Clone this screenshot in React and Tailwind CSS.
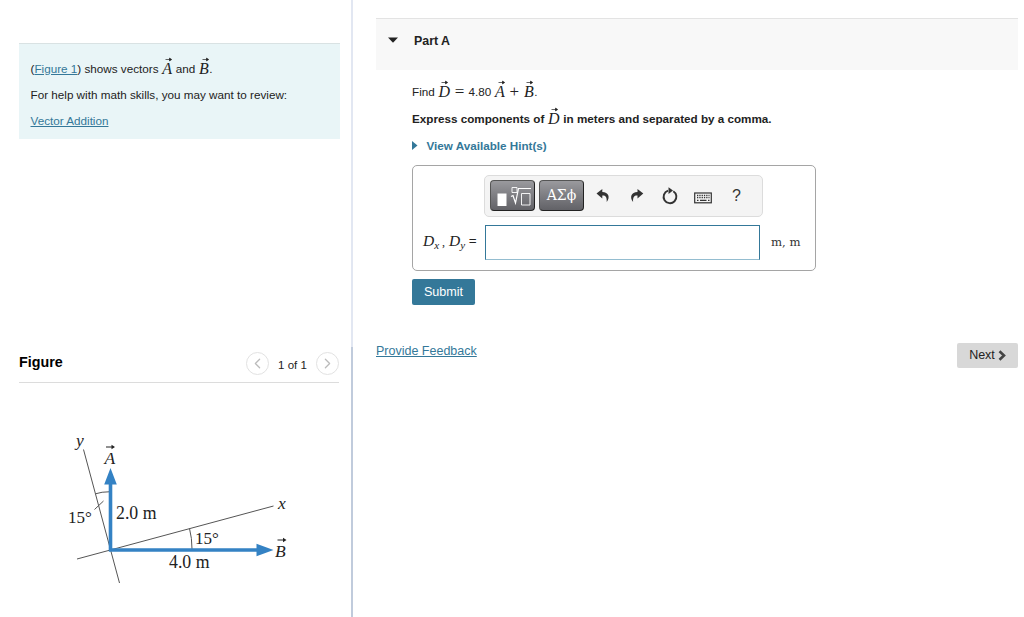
import { ChevronLeft, ChevronRight } from 'lucide-react';

function Vec({ name }) {
  return (
    <span className="relative inline-block px-[0.5px] font-['Liberation_Serif',serif] text-[16px] font-normal italic leading-none">
      {name}
      <svg className="absolute -top-[4px] left-[3px]" width="8" height="5" viewBox="0 0 8 5">
        <path d="M0.500 2.500H6M4.500 1.100L6.700 2.500L4.500 3.900Z" fill="#222" stroke="#222" strokeWidth="0.700" />
      </svg>
    </span>
  );
}

function Link({ children }) {
  return <a href="#" className="text-[#347899] underline underline-offset-[1px]">{children}</a>;
}

function IntroCard() {
  return (
    <section className="mt-[43px] ml-[19px] h-[96px] w-[321px] border-t border-[#d9e2e3] bg-[#e9f5f7] pt-[12px] pl-[11.5px] text-[11.7px] text-[#222]">
      <p className="flex h-[26px] items-center pb-[1px] whitespace-pre">
        <span>(<Link>Figure 1</Link>) shows vectors </span>
        <Vec name="A" />
        <span> and </span>
        <Vec name="B" />
        <span>.</span>
      </p>
      <p className="flex h-[26px] items-center whitespace-pre">For help with math skills, you may want to review:</p>
      <p className="flex h-[26px] items-center"><Link>Vector Addition</Link></p>
    </section>
  );
}

function VectorFigure() {
  return (
    <svg className="mt-[37px] ml-[50px]" width="260" height="180" viewBox="50 420 260 180" fontFamily="'Liberation Serif', serif" fill="#222">
      <g fill="none" stroke="#555" strokeWidth="1">
        <path d="M83.500 449.500L119.500 583" />
        <path d="M77 559L273.500 506" />
        <path d="M95.500 493.800Q102 491.700 109 491.800" />
        <path d="M189.500 528.500Q192 538 192 549" />
        <path d="M94.500 509.500L103.500 501" />
      </g>
      <path d="M110.500 551.500V482M109 550H258" fill="none" stroke="#3482c4" strokeWidth="3.600" />
      <path d="M110.500 468L116.800 484.500H104.200ZM273.500 550L256.500 543.700V556.300Z" fill="#3482c4" />
      <text x="76" y="446" fontSize="17.5" fontStyle="italic">y</text>
      <text x="278" y="509" fontSize="17.5" fontStyle="italic">x</text>
      <text x="104.500" y="464" fontSize="17.5" fontStyle="italic">A</text>
      <text x="275" y="557" fontSize="17.5" fontStyle="italic">B</text>
      <path d="M106 447H113M277.500 540H284.500" fill="none" stroke="#222" strokeWidth="1" />
      <path d="M111.500 444.800L115 447L111.500 449.200ZM283 537.800L286.500 540L283 542.200Z" />
      <text x="68" y="523" fontSize="17">15°</text>
      <text x="116" y="519" fontSize="17.8">2.0 m</text>
      <text x="195" y="544" fontSize="17">15°</text>
      <text x="169" y="568" fontSize="17.8">4.0 m</text>
    </svg>
  );
}

function FigurePanel() {
  return (
    <section>
      <header className="mt-[208px] ml-[19px] flex h-[36px] w-[320px] border-b border-[#dcdcdc] text-[#222]">
        <h2 className="flex-1 pt-[5px] text-[14.3px] leading-[20px] font-bold text-black">Figure</h2>
        <div className="flex h-[35px] items-start pt-[5px]">
          <button className="flex size-[23px] items-center justify-center rounded-full border border-[#e2e2e2] text-[#bbb]">
            <ChevronLeft size={17} strokeWidth={1.8} />
          </button>
          <span className="w-[47px] pt-[2px] text-center text-[11.5px] leading-[23px]">1 of 1</span>
          <button className="flex size-[23px] items-center justify-center rounded-full border border-[#e2e2e2] text-[#bbb]">
            <ChevronRight size={17} strokeWidth={1.8} />
          </button>
        </div>
      </header>
      <VectorFigure />
    </section>
  );
}

function Toolbar() {
  const key = 'flex h-[31px] w-[45px] items-center justify-center rounded-[4px] border border-[#555] border-r-[#222] border-b-[#222] bg-linear-to-b from-[#9a9a9e] to-[#626267] text-white';
  return (
    <div className="ml-[71px] flex h-[42px] w-[279px] items-center rounded-[5px] border border-[#dcdcdc] bg-[#f4f4f4] pb-[1px] pl-[5px] text-[#333]">
      <button className={key}>
        <svg width="36" height="22" viewBox="0 0 36 22" fill="none" stroke="#fff">
          <path d="M2.500 8.500h9v12.500h-9z" fill="#fff" stroke="none" />
          <path d="M17 2.500h5v5h-5zM26.500 8.500h8.500v11.500h-8.500z" strokeWidth="0.900" />
          <path d="M16 11.500L18 10.500L20.500 18L23.500 3.500H36" strokeWidth="1.200" />
        </svg>
      </button>
      <button className={`${key} ml-[4px] font-['DejaVu_Serif',serif] text-[14px]`}>ΑΣϕ</button>
      <svg className="ml-[12px]" width="15" height="15" viewBox="0 0 15 15">
        <path d="M6.300 1L0.500 5.500L6.300 10.400V7.600C9.500 7.400 11 9 10.700 14C14.500 9 12.600 4 6.300 3.900Z" fill="#333" />
      </svg>
      <svg className="ml-[18px]" width="15" height="15" viewBox="0 0 15 15">
        <path d="M8.500 1L14.300 5.500L8.500 10.400V7.600C5.300 7.400 3.800 9 4.100 14C0.300 9 2.200 4 8.500 3.900Z" fill="#333" />
      </svg>
      <svg className="ml-[17px]" width="18" height="18" viewBox="0 0 18 18">
        <path d="M12.300 4.300A6.400 6.400 0 1 1 7 3.700" fill="none" stroke="#333" strokeWidth="1.900" />
        <path d="M7.500 0.300L12 3.600L7.500 7Z" fill="#333" />
      </svg>
      <svg className="mt-[4px] ml-[15px]" width="18" height="12" viewBox="0 0 18 12">
        <rect x="0.700" y="1" width="16.600" height="9.800" fill="none" stroke="#333" strokeWidth="1.200" />
        <path d="M3 3.500H15.500M3 5.700H15.500" stroke="#333" strokeWidth="1.300" strokeDasharray="1.300 1" />
        <path d="M3 8.300H4.500M6 8.300H12.500M14 8.300H15.500" stroke="#333" strokeWidth="1.300" />
      </svg>
      <span className="ml-[20px] text-[16px] leading-none">?</span>
    </div>
  );
}

function AnswerBox() {
  return (
    <div className="mt-[5px] h-[106px] w-[404px] rounded-[5px] border border-[#a5a5a5] pt-[9px]">
      <Toolbar />
      <div className="mt-[8px] flex h-[35px] items-center">
        <label className="w-[72px] pb-[3px] pl-[10px] font-['Liberation_Serif',serif] text-[15.500px] whitespace-pre">
          <i>D</i><sub className="-bottom-[3px] text-[11px] italic">x</sub><span className="text-[12px]"> , </span><i className="ml-[1px]">D</i><sub className="-bottom-[3px] text-[11px] italic">y</sub>
          <span className="text-[14px] font-bold"> =</span>
        </label>
        <input className="h-[35px] w-[275px] border border-[#347899] border-b-[#94bdd0] bg-white px-2 outline-none" />
        <span className="ml-[11px] pt-[1px] font-['DejaVu_Serif',serif] text-[11.700px] text-[#333]">m, m</span>
      </div>
    </div>
  );
}

function PartA() {
  return (
    <main className="w-[642px] pt-[18px] text-[11.68px] text-[#222]">
      <header className="flex h-[52px] border-t border-[#e3e3e3] bg-[#f8f8f8] pt-[12px] pl-[12px]">
        <svg className="mt-[6px]" width="10" height="6" viewBox="0 0 10 6"><path d="M0 0.500H10L5 5.700Z" fill="#222" /></svg>
        <h1 className="ml-[16px] text-[12.4px] leading-[20px] font-bold">Part A</h1>
      </header>
      <div className="pt-[8px] pl-[36px]">
        <p className="flex h-[27px] items-center whitespace-pre">
          <span>Find </span><Vec name="D" />
          <span className="font-['Liberation_Serif',serif] text-[17px]"> = </span><span>4.80 </span>
          <Vec name="A" />
          <span className="font-['Liberation_Serif',serif] text-[17px]"> + </span>
          <Vec name="B" /><span>.</span>
        </p>
        <p className="flex h-[27px] items-center font-bold whitespace-pre">
          <span>Express components of </span><Vec name="D" /><span> in meters and separated by a comma.</span>
        </p>
        <button className="flex h-[28px] items-center font-bold text-[#347899]">
          <svg className="mb-[2px]" width="6" height="9" viewBox="0 0 6 9"><path d="M0 0L5.500 4.500L0 9Z" fill="#347899" /></svg>
          <span className="ml-[8.5px]">View Available Hint(s)</span>
        </button>
        <AnswerBox />
        <button className="mt-[8px] block h-[26px] w-[63px] rounded-[2px] bg-[#347899] pt-[1px] text-[12.6px] text-white">Submit</button>
      </div>
      <footer className="mt-[38px] flex justify-between">
        <span className="text-[12.5px] leading-[16px]"><Link>Provide Feedback</Link></span>
        <button className="flex h-[25px] w-[61px] items-center justify-center gap-[3px] rounded-[2px] bg-[#d8d8d8] pb-[1px] text-[12.5px]">
          Next
          <svg width="8" height="11" viewBox="0 0 8 11"><path d="M1.500 1.200L6 5.500L1.500 9.800" fill="none" stroke="#444" strokeWidth="2.600" /></svg>
        </button>
      </footer>
    </main>
  );
}

export default function App() {
  return (
    <div className="flex h-[617px] w-[1024px] overflow-hidden bg-white font-['Liberation_Sans',Arial,sans-serif]">
      <aside className="w-[351px] shrink-0">
        <IntroCard />
        <FigurePanel />
      </aside>
      <div className="mr-[23px] flex w-[2px] shrink-0 flex-col">
        <div className="h-[347px] bg-[#e2e7f2]" />
        <div className="flex-1 bg-[#c0cbdc]" />
      </div>
      <PartA />
    </div>
  );
}
